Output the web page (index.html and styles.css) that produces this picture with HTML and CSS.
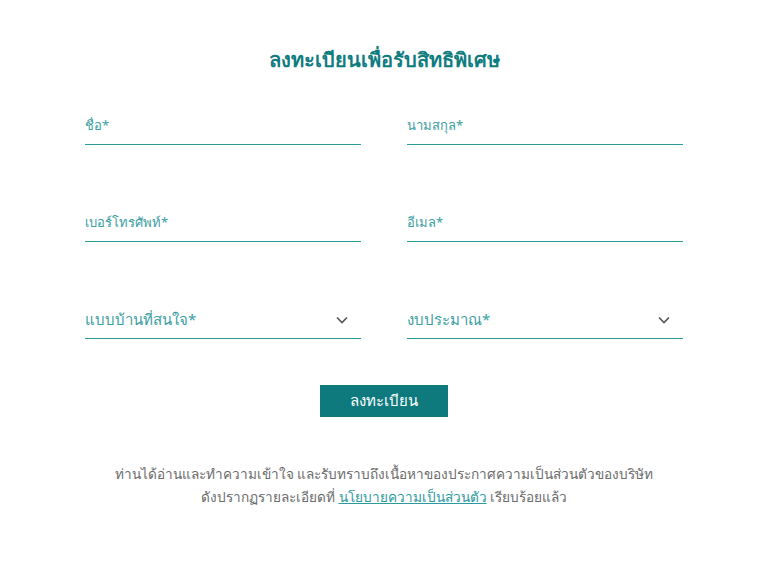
FILE: index.html
```html
<!DOCTYPE html>
<html lang="th">
<head>
    <meta charset="UTF-8">
    <title>ลงทะเบียนเพื่อรับสิทธิพิเศษ</title>
    <link rel="stylesheet" href="styles.css">
</head>
<body>
    <div class="register">
        <h1 class="register-title">ลงทะเบียนเพื่อรับสิทธิพิเศษ</h1>
        <form class="register-form">
            <div class="field"><span class="field-label">ชื่อ*</span></div>
            <div class="field"><span class="field-label">นามสกุล*</span></div>
            <div class="field"><span class="field-label">เบอร์โทรศัพท์*</span></div>
            <div class="field"><span class="field-label">อีเมล*</span></div>
            <div class="field select">
                <span class="field-label">แบบบ้านที่สนใจ*</span>
                <svg class="chevron" width="12" height="8" viewBox="0 0 12 8"><path d="M1 1.5l5 5 5-5" fill="none" stroke="#555" stroke-width="1.6"/></svg>
            </div>
            <div class="field select">
                <span class="field-label">งบประมาณ*</span>
                <svg class="chevron" width="12" height="8" viewBox="0 0 12 8"><path d="M1 1.5l5 5 5-5" fill="none" stroke="#555" stroke-width="1.6"/></svg>
            </div>
        </form>
        <div class="actions">
            <button type="button" class="btn-submit">ลงทะเบียน</button>
        </div>
        <p class="consent">
            ท่านได้อ่านและทำความเข้าใจ และรับทราบถึงเนื้อหาของประกาศความเป็นส่วนตัวของบริษัท<br>
            ดังปรากฏรายละเอียดที่ <a href="#">นโยบายความเป็นส่วนตัว</a> เรียบร้อยแล้ว
        </p>
    </div>
</body>
</html>
```

FILE: styles.css
```css
body {
    margin: 0;
    background: #fff;
    font-family: "Noto Sans", "DejaVu Sans", sans-serif;
}
.register {
    width: 598px;
    margin: 0 auto;
    padding-top: 44px;
}
.register-title {
    margin: 0;
    text-align: center;
    font-size: 20px;
    font-weight: 700;
    line-height: 32px;
    color: #0f7c80;
}
.register-form {
    display: grid;
    grid-template-columns: 276px 276px;
    column-gap: 46px;
    row-gap: 61px;
    margin-top: 33px;
}
.field {
    display: flex;
    align-items: center;
    justify-content: space-between;
    height: 36px;
    padding-bottom: 2px;
    border-bottom: 1px solid #2a9a9e;
    box-sizing: border-box;
}
.field-label {
    font-size: 13px;
    color: #3a9ea2;
}
.select .field-label {
    font-size: 15px;
}
.chevron {
    margin-right: 13px;
}
.actions {
    display: flex;
    justify-content: center;
    margin-top: 46px;
}
.btn-submit {
    width: 128px;
    height: 32px;
    border: none;
    background: #0e7a7e;
    color: #fff;
    font-family: inherit;
    font-size: 15px;
    cursor: pointer;
}
.consent {
    margin: 45px 0 0;
    text-align: center;
    font-size: 13.6px;
    line-height: 23px;
    color: #6b6b6b;
}
.consent a {
    color: #2a9a9e;
}
```
